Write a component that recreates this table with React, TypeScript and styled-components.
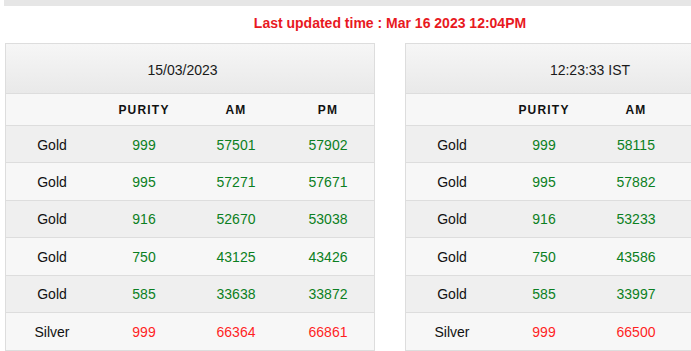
import React from "react";
import styled, { createGlobalStyle } from "styled-components";

const Global = createGlobalStyle`
  html, body { margin: 0; padding: 0; background: #fff; overflow: hidden; }
  body { font-family: "Liberation Sans", Arial, sans-serif; }
`;

const TopBar = styled.div`
  margin-left: 4px;
  height: 6px;
  background: #e6e6e6;
`;

const Container = styled.div`
  margin-left: 5px;
  width: 770px;
`;

const Title = styled.div`
  text-align: center;
  color: #e8191f;
  font-weight: bold;
  font-size: 14px;
  height: 37px;
  line-height: 20px;
  padding-top: 7px;
  box-sizing: border-box;
`;

const Tables = styled.div`
  display: flex;
  gap: 30px;
`;

const Table = styled.div`
  width: 370px;
  flex: none;
  border: 1px solid #dddddd;
  box-sizing: border-box;
`;

const Header = styled.div<{ $shift?: number }>`
  height: 50px;
  box-sizing: border-box;
  border-bottom: 1px solid #dddddd;
  background: linear-gradient(#f6f6f6, #e9e9e9);
  display: flex;
  align-items: center;
  justify-content: center;
  font-size: 14px;
  color: #1a1a1a;
  padding-right: ${(p) => p.$shift ?? 0}px;
  padding-top: 2px;
`;

const Row = styled.div<{ $bg: string; $h: number; $last?: boolean }>`
  display: grid;
  grid-template-columns: repeat(4, 1fr);
  height: ${(p) => p.$h}px;
  box-sizing: border-box;
  background: ${(p) => p.$bg};
  border-bottom: ${(p) => (p.$last ? "none" : "1px solid #dddddd")};
  align-items: center;
`;

const HeadCell = styled.div`
  text-align: center;
  font-weight: bold;
  font-size: 12px;
  letter-spacing: 1.2px;
  color: #111;
`;

const Cell = styled.div<{ $color: string }>`
  text-align: center;
  font-size: 14px;
  padding-top: 1px;
  color: ${(p) => p.$color};
`;

type Item = { metal: string; purity: string; am: string; pm: string };

const left: Item[] = [
  { metal: "Gold", purity: "999", am: "57501", pm: "57902" },
  { metal: "Gold", purity: "995", am: "57271", pm: "57671" },
  { metal: "Gold", purity: "916", am: "52670", pm: "53038" },
  { metal: "Gold", purity: "750", am: "43125", pm: "43426" },
  { metal: "Gold", purity: "585", am: "33638", pm: "33872" },
  { metal: "Silver", purity: "999", am: "66364", pm: "66861" },
];

const right: Item[] = [
  { metal: "Gold", purity: "999", am: "58115", pm: "" },
  { metal: "Gold", purity: "995", am: "57882", pm: "" },
  { metal: "Gold", purity: "916", am: "53233", pm: "" },
  { metal: "Gold", purity: "750", am: "43586", pm: "" },
  { metal: "Gold", purity: "585", am: "33997", pm: "" },
  { metal: "Silver", purity: "999", am: "66500", pm: "" },
];

const GREEN = "#0b7f22";
const RED = "#ff1f1f";

function RateTable({ title, rows, pm, shift }: { title: string; rows: Item[]; pm: boolean; shift?: number }) {
  return (
    <Table>
      <Header $shift={shift}>{title}</Header>
      <Row $bg="#f7f7f7" $h={32}>
        <HeadCell />
        <HeadCell>PURITY</HeadCell>
        <HeadCell>AM</HeadCell>
        <HeadCell>{pm ? "PM" : ""}</HeadCell>
      </Row>
      {rows.map((r, i) => {
        const c = r.metal === "Silver" ? RED : GREEN;
        return (
          <Row key={i} $bg={i % 2 === 0 ? "#efefef" : "#f7f7f7"} $h={37.4} $last={i === rows.length - 1}>
            <Cell $color="#111">{r.metal}</Cell>
            <Cell $color={c}>{r.purity}</Cell>
            <Cell $color={c}>{r.am}</Cell>
            <Cell $color={c}>{r.pm}</Cell>
          </Row>
        );
      })}
    </Table>
  );
}

export default function App() {
  return (
    <>
      <Global />
      <TopBar />
      <Container>
        <Title>Last updated time : Mar 16 2023 12:04PM</Title>
        <Tables>
          <RateTable title="15/03/2023" rows={left} pm shift={15} />
          <RateTable title="12:23:33 IST" rows={right} pm={false} />
        </Tables>
      </Container>
    </>
  );
}
